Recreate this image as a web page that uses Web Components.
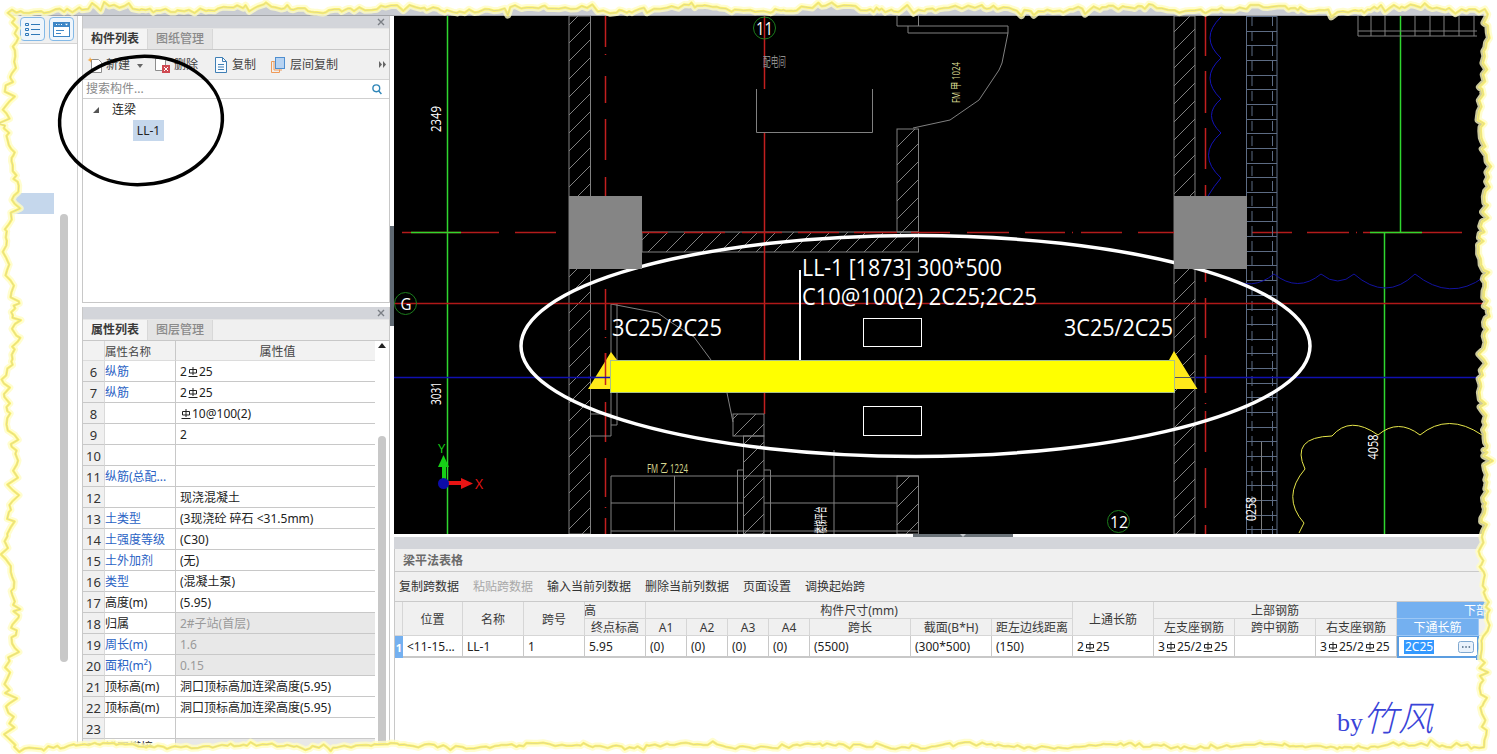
<!DOCTYPE html>
<html lang="zh-CN">
<head>
<meta charset="utf-8">
<title>梁平法表格</title>
<style>
    html, body { margin: 0; background: #fff; overflow: hidden; }
</style>
</head>
<body>
<app-shell>
    <side-rail slot="rail"></side-rail>

    <dock-panel slot="top" tab="构件列表" other="图纸管理"><component-list></component-list></dock-panel>
    <dock-panel slot="bottom" tab="属性列表" other="图层管理"><prop-table></prop-table></dock-panel>

    <cad-view slot="canvas"></cad-view>
    <span-editor slot="editor"></span-editor>
</app-shell>
<mark-up></mark-up>
<torn-edge></torn-edge>

<script>
const FONT = '"Noto Sans", "Noto Sans CJK SC", sans-serif';

class AppShell extends HTMLElement {
    constructor() {
        super();
        this.attachShadow({ mode: "open" });
        this.shadowRoot.innerHTML = `
            <style>
                :host {
                    display: grid;
                    grid-template-columns: 82px 308px 4px 1103px;
                    grid-template-rows: 16px 738px;
                    width: 1497px;
                    height: 754px;
                    overflow: hidden;
                    font: 12px/1 ${FONT};
                    color: #2b2b2b;
                }
                .band { grid-column: 1 / -1; background: #c9ccd2; border-bottom: 1px solid #a2a4a8; box-sizing: border-box; }
                .docks { display: flex; flex-direction: column; gap: 4px; min-height: 0; }
                .split { background: #fff; display: flex; flex-direction: column; }
                .split i { display: block; height: 100px; margin-top: 210px; background: #5f6972; }
                .main { display: flex; flex-direction: column; min-width: 0; }
            </style>
            <div class="band"></div>
            <slot name="rail"></slot>
            <div class="docks">
                <slot name="top"></slot>
                <slot name="bottom"></slot>
            </div>
            <div class="split"><i></i></div>
            <div class="main">
                <slot name="canvas"></slot>
                <slot name="editor"></slot>
            </div>
        `;
    }
}

class SideRail extends HTMLElement {
    constructor() {
        super();
        this.attachShadow({ mode: "open" });
        this.shadowRoot.innerHTML = `
            <style>
                :host { display: block; box-sizing: border-box; width: 78px; border-right: 1px solid #cfcfcf; background: #fff; }
                .bar {
                    height: 28px; box-sizing: border-box; background: #f0f0f0; border-bottom: 1px solid #d4d4d4;
                    display: flex; justify-content: flex-end; gap: 4px; padding: 1px 3px 0 0;
                }
                .btn {
                    width: 25px; height: 24px; box-sizing: border-box; border: 1px solid #84b9e6; border-radius: 4px;
                    background: #eef5fc; display: flex; align-items: center; justify-content: center;
                }
                .sel { height: 21px; width: 54px; margin-top: 149px; background: #c5d7ec; }
                .thumb { width: 8px; height: 448px; margin-left: 60px; background: #c8c8c8; border-radius: 4px; }
            </style>
            <div class="bar">
                <div class="btn">
                    <svg width="19" height="17" viewBox="0 0 19 17" fill="none" stroke="#2f78b8">
                        <path d="M2.5 2.5h3v2h-3zM2.5 7.5h3v2h-3zM2.5 12.5h3v2h-3z"/>
                        <path d="M8 3.5h9M8 8.5h9M8 13.5h9"/>
                    </svg>
                </div>
                <div class="btn">
                    <svg width="19" height="17" viewBox="0 0 19 17">
                        <rect x="1.5" y="1.5" width="16" height="14" fill="#fff" stroke="#3d86c6"/>
                        <rect x="1" y="1" width="17" height="5" fill="#3d86c6"/>
                        <path d="M4 3.5h1M6.5 3.5h1M9 3.5h1" stroke="#fff"/>
                        <path d="M13 2.8h3l-1.5 1.8z" fill="#fff"/>
                        <path d="M4 9.5h8M4 12.5h5" stroke="#3d86c6"/>
                    </svg>
                </div>
            </div>
            <div class="sel"></div>
            <div class="thumb"></div>
        `;
    }
}

class DockPanel extends HTMLElement {
    constructor() {
        super();
        this.attachShadow({ mode: "open" });
    }

    connectedCallback() {
        this.shadowRoot.innerHTML = `
            <style>
                :host { display: flex; flex-direction: column; box-sizing: border-box; border-left: 1px solid #c8c8c8; border-right: 1px solid #c8c8c8; border-bottom: 1px solid #c8c8c8; background: #fff; min-height: 0; }
                :host([slot="top"]) { height: 287px; flex: none; }
                :host([slot="bottom"]) { flex: 1; }
                .title { height: 12px; flex: none; background: #d3d5da; display: flex; justify-content: flex-end; align-items: center; padding-right: 4px; }
                .tabs { height: 22px; flex: none; box-sizing: border-box; display: flex; background: #f0f0f0; border-bottom: 1px solid #c8c8c8; border-top: 1px solid #e6e6e6; }
                .tab { width: 64px; display: flex; align-items: center; justify-content: center; border-right: 1px solid #d8d8d8; }
                .on { font-weight: 700; color: #3a3a3a; background: #f4f4f4; }
                .off { color: #8a8a8a; background: #e4e4e4; font-weight: 500; }
                .body { flex: 1; min-height: 0; display: flex; flex-direction: column; }
            </style>
            <div class="title">
                <svg width="8" height="8" viewBox="0 0 8 8" stroke="#7b7f85" stroke-width="1.4"><path d="M1 1l6 6M7 1l-6 6"/></svg>
            </div>
            <div class="tabs">
                <div class="tab on">${this.getAttribute("tab")}</div>
                <div class="tab off">${this.getAttribute("other")}</div>
            </div>
            <div class="body"><slot></slot></div>
        `;
    }
}

class ToolBtn extends HTMLElement {
    constructor() {
        super();
        this.attachShadow({ mode: "open" });
        this.shadowRoot.innerHTML = `
            <style>
                :host { display: inline-flex; align-items: center; gap: var(--gap, 4px); color: #444; }
            </style>
            <slot name="icon"></slot><slot></slot>
        `;
    }
}

class ComponentList extends HTMLElement {
    constructor() {
        super();
        this.attachShadow({ mode: "open" });
        this.shadowRoot.innerHTML = `
            <style>
                :host { display: flex; flex-direction: column; flex: 1; }
                .tools { height: 30px; box-sizing: border-box; flex: none; display: flex; align-items: center; background: #f0f0f0; border-bottom: 1px solid #d4d4d4; padding: 0 3px 0 4px; }
                .arrow { width: 0; height: 0; border: 3px solid transparent; border-top: 4px solid #666; border-bottom: 0; margin: 2px 12px 0 7px; }
                .more { margin-left: auto; }
                .search { height: 18px; flex: none; border-bottom: 1px solid #cfcfcf; display: flex; align-items: center; justify-content: space-between; padding: 0 7px 0 3px; color: #8a8a8a; }
                .tree { padding-top: 1px; }
                .group { height: 20px; display: flex; align-items: center; padding-left: 10px; color: #222; }
                .tri { width: 0; height: 0; border-style: solid; border-width: 0 0 6px 6px; border-color: transparent transparent #555 transparent; margin-right: 13px; }
                .leaf { width: 31px; height: 21px; margin-left: 50px; background: #c5d7ec; display: flex; align-items: center; justify-content: center; color: #222; }
            </style>
            <div class="tools">
                <tool-btn style="--gap:3px">
                    <svg slot="icon" width="16" height="18" viewBox="0 0 16 18" fill="none">
                        <path d="M4.5 3.5h7l3 3v10h-10z" fill="#fff" stroke="#8d8d8d"/>
                        <path d="M3 1l.8 2L6 3.5l-2 1L3.5 6.8 2.6 4.7.5 4l2-.8z" fill="#f6a43a"/>
                    </svg>
                    新建
                </tool-btn>
                <span class="arrow"></span>
                <tool-btn>
                    <svg slot="icon" width="15" height="17" viewBox="0 0 15 17" fill="none">
                        <path d="M.5 2.5h8l2 2v10H.5z" fill="#fff" stroke="#8d8d8d"/>
                        <rect x="7" y="9" width="8" height="8" fill="#cf4a52"/>
                        <path d="M9 11l4 4M13 11l-4 4" stroke="#fff"/>
                    </svg>
                    删除
                </tool-btn>
                <tool-btn style="margin-left:16px">
                    <svg slot="icon" width="14" height="16" viewBox="0 0 14 16" fill="none" stroke="#3f7fb5">
                        <path d="M1.5 .5h7l4 4v11h-11z" fill="#f7fbff"/>
                        <path d="M8.5 .5v4h4M4 7.5h6M4 10h6M4 12.5h6"/>
                    </svg>
                    复制
                </tool-btn>
                <tool-btn style="margin-left:15px; --gap:5px">
                    <svg slot="icon" width="14" height="16" viewBox="0 0 14 16" fill="none">
                        <path d="M3.5 4.5H.5v11h8v-3M3 4v9h8" stroke="#ef9a58"/>
                        <rect x="4.5" y=".5" width="9" height="11" fill="#b7d3f2" stroke="#4f8fd0"/>
                    </svg>
                    层间复制
                </tool-btn>
                <svg class="more" width="7" height="7" viewBox="0 0 7 7" fill="#666"><path d="M0 0l3 3.5L0 7zM4 0l3 3.5L4 7z"/></svg>
            </div>
            <div class="search">
                <span>搜索构件...</span>
                <svg width="10" height="11" viewBox="0 0 10 11" fill="none" stroke="#2f86b8" stroke-width="1.4"><circle cx="4.3" cy="4.3" r="3.4"/><path d="M6.8 7l2.6 3"/></svg>
            </div>
            <div class="tree">
                <div class="group"><span class="tri"></span>连梁</div>
                <div class="leaf">LL-1</div>
            </div>
        `;
    }
}

class RebarMark extends HTMLElement {
    constructor() {
        super();
        this.attachShadow({ mode: "open" });
        this.shadowRoot.innerHTML = `
            <style>
                :host { display: inline-block; width: 10px; height: 10px; margin: 0 1px; vertical-align: 3px; }
                svg { display: block; }
            </style>
            <svg width="10" height="10" viewBox="0 0 10 10" fill="none" stroke="#222">
                <path d="M5 0v8M1.5 2.5h7v3.5h-7zM.5 9.5h9"/>
            </svg>
        `;
    }
}

const PROPS = [
    [6, "纵筋", "2<rebar-mark></rebar-mark>25", 1],
    [7, "纵筋", "2<rebar-mark></rebar-mark>25", 1],
    [8, "", "<rebar-mark></rebar-mark>10@100(2)"],
    [9, "", "2"],
    [10, "", ""],
    [11, "纵筋(总配...", "", 1],
    [12, "", "现浇混凝土"],
    [13, "土类型", "(3现浇砼 碎石 &lt;31.5mm)", 1],
    [14, "土强度等级", "(C30)", 1],
    [15, "土外加剂", "(无)", 1],
    [16, "类型", "(混凝土泵)", 1],
    [17, "高度(m)", "(5.95)"],
    [18, "归属", "2#子站(首层)", 0, 1],
    [19, "周长(m)", "1.6", 1, 1],
    [20, "面积(m²)", "0.15", 1, 1],
    [21, "顶标高(m)", "洞口顶标高加连梁高度(5.95)"],
    [22, "顶标高(m)", "洞口顶标高加连梁高度(5.95)"],
    [23, "", ""],
    [24, "锚固搭接", "", 0, 1]
];

class PropTable extends HTMLElement {
    constructor() {
        super();
        this.attachShadow({ mode: "open" });
        const rows = PROPS.map(([n, name, value, link, locked]) => `
            <div class="no">${n}</div>
            <div class="name ${link ? "link" : ""}">${name}</div>
            <div class="val ${locked ? "locked" : ""}">${value}</div>
        `).join("");
        this.shadowRoot.innerHTML = `
            <style>
                :host { display: flex; flex: 1; min-height: 0; overflow: hidden; }
                .grid { width: 292px; display: grid; grid-template-columns: 22px 71px 199px; grid-template-rows: 20px repeat(18, 21px) 16px; align-content: start; }
                .grid > div { box-sizing: border-box; border-bottom: 1px solid #c8c8c8; display: flex; align-items: center; white-space: nowrap; overflow: hidden; padding-top: 2px; }
                .no { background: #f0f0f0; justify-content: center; font-size: 13px; color: #333; border-right: 1px solid #dadada; }
                .name { border-right: 1px solid #c8c8c8; color: #222; }
                .link { color: #2a62c4; }
                .val { padding-left: 4px; color: #222; }
                .locked { background: #e8e8e8; color: #9a9a9a; }
                .head { background: #f2f2f2; color: #444; border-bottom-color: #dcdcdc !important; }
                .mid { justify-content: center; }
                .name.head { padding-left: 0; justify-content: flex-start; font-size: 11.5px; }
                .scroll { width: 14px; flex: none; position: relative; background: #fff; display: flex; flex-direction: column; align-items: center; }
                .up { width: 0; height: 0; border: 4px solid transparent; border-bottom: 5px solid #222; border-top: 0; margin-top: 2px; }
                .thumb { width: 8px; height: 320px; margin-top: 88px; border-radius: 4px; background: #c8c8c8; }
            </style>
            <div class="grid">
                <div class="no head"></div>
                <div class="name head"><span>属性名称</span></div>
                <div class="val head mid">属性值</div>
                ${rows}
            </div>
            <div class="scroll"><span class="up"></span><span class="thumb"></span></div>
        `;
    }
}

// drawing helpers for the CAD view
const WALL = "#808080";
const RED = "#c21f1f";
const GREEN = "#2fd62f";
const line = (x1, y1, x2, y2, c = WALL, w = 1) => `<line x1="${x1}" y1="${y1}" x2="${x2}" y2="${y2}" stroke="${c}" stroke-width="${w}" shape-rendering="crispEdges"/>`;
// coloured axis lines are a bit heavier and softer than the walls
const axisV = (x, a, b, c) => `<line x1="${x + 0.5}" y1="${a}" x2="${x + 0.5}" y2="${b}" stroke="${c}" stroke-width="1.5"/>`;
const axisH = (y, a, b, c) => `<line x1="${a}" y1="${y + 0.5}" x2="${b}" y2="${y + 0.5}" stroke="${c}" stroke-width="1.5"/>`;
const hatch = (x, y, w, h) => `<rect x="${x}" y="${y}" width="${w}" height="${h}" fill="url(#hatch)" stroke="${WALL}"/>`;
const vdash = (x, parts, c = RED) => parts.map(([a, b]) => axisV(x, a, b, c)).join("");
const hdash = (y, parts, c = "#b31b1b") => parts.map(([a, b]) => axisH(y, a, b, c)).join("");
const label = (x, y, s, len, fs, fill = "#fff") => `<text x="${x}" y="${y}" font-size="${fs}" fill="${fill}" textLength="${len}" lengthAdjust="spacingAndGlyphs">${s}</text>`;
const turned = (cx, cy, s, len, fs, fill = "#fff") => `<text transform="translate(${cx} ${cy}) rotate(-90)" y="0.36em" text-anchor="middle" font-size="${fs}" fill="${fill}" textLength="${len}" lengthAdjust="spacingAndGlyphs">${s}</text>`;
const axis = (cx, cy, s, tx, ty, len, fs) => `<circle cx="${cx}" cy="${cy}" r="11" fill="none" stroke="#1c7d1c"/>` + label(tx, ty, s, len, fs);

class CadView extends HTMLElement {
    constructor() {
        super();
        this.attachShadow({ mode: "open" });

        let ladder = "";
        for (let i = 0; i < 36; i++) {
            const y = Math.round(16 + i * 14.67);
            ladder += line(1247, y, 1277, y, "#5d6c84");
        }

        this.shadowRoot.innerHTML = `
            <style>
                :host { display: block; width: 1103px; height: 518px; background: #000; flex: none; }
                svg { display: block; }
                text { font-family: "Open Sans", "Noto Sans CJK SC", sans-serif; }
            </style>
            <svg width="1103" height="518" viewBox="394 16 1103 518" fill="none">
                <defs>
                    <pattern id="hatch" width="18" height="18" patternUnits="userSpaceOnUse">
                        <path d="M0 18L18 0" stroke="#808080"/>
                    </pattern>
                </defs>

                ${axisV(447, 16, 534, GREEN)}
                ${hatch(569, 16, 21.5, 518)}
                ${hatch(1174, 16, 21, 518)}
                ${hatch(642, 232, 276.5, 20)}
                ${hatch(897, 129, 21.5, 103)}

                ${vdash(605, [[16, 47], [54, 55], [76, 103], [119, 160], [177, 196], [289, 330], [337, 338], [353, 385], [402, 442], [458, 497], [507, 508], [518, 534]])}
                ${vdash(1205, [[16, 56], [71, 113], [128, 169], [185, 196], [270, 282], [298, 338], [355, 393], [403, 404], [411, 452], [468, 508], [525, 534]])}
                ${axisV(764, 16, 89, RED)}
                ${axisV(764, 133, 414, RED)}

                ${hdash(232, [[402, 499], [515, 556], [642, 668], [684, 725], [742, 782], [798, 839], [854, 897], [911, 950], [967, 1009], [1025, 1065], [1072, 1073], [1081, 1122], [1138, 1174], [1252, 1292], [1307, 1349], [1356, 1357], [1363, 1462]])}
                ${axisH(232, 411, 461, GREEN)}
                ${axisH(232, 1370, 1422, GREEN)}
                ${axisV(1400, 16, 232, GREEN)}
                ${axisV(1384, 232, 534, GREEN)}

                <!-- upper rooms -->
                <path d="M756.5 89V132.5H872.5V89" stroke="${WALL}"/>
                <path d="M897 16V26H1008V33H908V26M918.5 16V26M1008 33L1006 43L1002 63L999 70L979 100L950 120L913 128" stroke="${WALL}"/>

                <!-- stair ladder -->
                <path d="M1246.5 16V534M1277 16V534" stroke="#5d6c84"/>
                ${ladder}
                <path d="M1252 16V534M1272.5 16V534" stroke="#5d6c84" stroke-dasharray="10 5"/>
                ${line(1261, 442, 1261, 534, WALL)}

                <!-- top right grid -->
                <path d="M1358 16V36H1477M1358 31H1477M1371 16V36M1385 16V36M1415 16V36M1430 16V36M1444 16V36M1459 16V36M1474 16V36" stroke="${WALL}"/>

                <!-- clouds -->
                <path d="M1221 17Q1199 38 1221 58Q1199 78 1221 99Q1202 115 1221 133Q1196 155 1221 178Q1214 186 1208 196" stroke="#1212b8"/>
                <path d="M1228 277Q1252 292 1274 274Q1298 293 1321 274Q1338 288 1354 274Q1386 302 1415 274Q1450 302 1484 277" stroke="#1212a0"/>
                <path d="M1299 533L1304 523Q1281 497 1305 469Q1290 437 1332 436Q1350 415 1378 435Q1398 418 1420 435Q1448 412 1482 435" stroke="#e6e64a"/>

                <!-- lower rooms -->
                <path d="M590.5 269V414H611M590.5 534V436H611V304H617V425H611M611 304L658 313L672 323L694 337L711 360M727 393L733 422" stroke="${WALL}"/>
                ${hatch(733, 414, 31, 22)}
                ${hatch(743.5, 436, 20.5, 98)}
                <path d="M737.5 534V470H743.5M764 470H770.5V534M834 450V534" stroke="${WALL}"/>
                <path d="M611 534V476H918.5M611 503H743M764 503H897M611 531H918.5M674.5 476V531" stroke="${WALL}"/>
                ${hatch(897, 476, 21.5, 58)}

                ${axisH(303, 394, 1497, "#b01818")}
                ${axisH(377, 394, 1497, "#1010b0")}

                <!-- the drawn ring runs under the columns -->
                <ellipse cx="915.5" cy="346" rx="394.5" ry="110.5" stroke="#fff" stroke-width="3.5"/>
                <rect x="569" y="196" width="73" height="73" fill="#858585"/>
                <rect x="1174" y="196" width="73" height="73" fill="#858585"/>

                <!-- beam -->
                <path d="M588 389L611 352L617 360H611V389Z" fill="#ffe91a"/>
                <path d="M1174 351L1197.5 389H1174V360H1169Z" fill="#ffe91a"/>
                ${axisV(605, 353, 385, RED)}
                ${axisH(377, 588, 611, "#1010b0")}
                ${line(1175, 377, 1195, 377, "#555")}
                <rect x="610.5" y="360.5" width="564" height="32" fill="#ffff00" stroke="#a9c08a"/>
                <rect x="863.5" y="318.5" width="58" height="28" stroke="#fff"/>
                <rect x="863.5" y="406.5" width="58" height="29" stroke="#fff"/>
                ${line(799.5, 270, 799.5, 360, "#fff", 2)}

                ${label(802, 276, "LL-1 [1873] 300*500", 200, 23)}
                ${label(802, 305, "C10@100(2) 2C25;2C25", 235, 23)}
                ${label(612, 336, "3C25/2C25", 110, 23)}
                ${label(1064, 336, "3C25/2C25", 109, 23)}

                ${axis(764.5, 28, "11", 756, 35, 17, 19)}
                ${axis(405.5, 303.5, "G", 400.5, 310, 11, 17)}
                ${axis(1118.5, 521.5, "12", 1110, 528, 18, 17)}

                ${label(763, 66, "配电间", 23, 13, "#8f8f8f")}
                ${label(647, 473, "FM 乙 1224", 41, 12, "#d8d890")}
                ${turned(956, 82.5, "FM 甲 1024", 41, 11, "#d8d890")}
                ${turned(436, 119, "2349", 26, 15)}
                ${turned(436, 393.5, "3031", 23, 15)}
                ${turned(1372.5, 447, "4058", 25, 14)}
                ${turned(1251, 509, "0258", 24, 14)}
                ${turned(820, 520, "楼梯平台", 27, 13)}

                <!-- ucs -->
                ${line(443.5, 483, 443.5, 465, "#16d016", 4)}
                <path d="M443.5 455L449 467H438Z" fill="#16d016"/>
                ${line(443, 483, 463, 483, "#e81414", 4)}
                <path d="M473 483.5L461 478V489Z" fill="#e81414"/>
                <circle cx="443.5" cy="483.5" r="5.5" fill="#0c0ca8"/>
                <text x="438" y="453" font-size="13" fill="#16d016">Y</text>
                <text x="475" y="489" font-size="14" fill="#e81414">X</text>
            </svg>
        `;
    }
}

class SpanEditor extends HTMLElement {
    constructor() {
        super();
        this.attachShadow({ mode: "open" });
        const mark = "<rebar-mark></rebar-mark>";
        const heads = [
            ["", "1/3", "1"],
            ["位置", "1/3", "2"],
            ["名称", "1/3", "3"],
            ["跨号", "1/3", "4"],
            ["<span class='cut'>高</span>", "1", "5"],
            ["构件尺寸(mm)", "1", "6/13"],
            ["上通长筋", "1/3", "13"],
            ["上部钢筋", "1", "14/17"],
            ["<span class='clip'>下部</span>", "1", "17/19", "blue"],
            ["终点标高", "2", "5"],
            ["A1", "2", "6"],
            ["A2", "2", "7"],
            ["A3", "2", "8"],
            ["A4", "2", "9"],
            ["跨长", "2", "10"],
            ["截面(B*H)", "2", "11"],
            ["距左边线距离", "2", "12"],
            ["左支座钢筋", "2", "14"],
            ["跨中钢筋", "2", "15"],
            ["右支座钢筋", "2", "16"],
            ["下通长筋", "2", "17", "blue"],
            ["", "2", "18"]
        ].map(([t, r, c, k]) => `<div class="h ${k || ""}" style="grid-row:${r};grid-column:${c}">${t}</div>`).join("");
        const cells = [
            "&lt;11-15...", "LL-1", "1", "5.95", "(0)", "(0)", "(0)", "(0)", "(5500)", "(300*500)", "(150)",
            `2${mark}25`, `3${mark}25/2${mark}25`, "", `3${mark}25/2${mark}25`
        ].map(t => `<div class="d">${t}</div>`).join("");

        this.shadowRoot.innerHTML = `
            <style>
                :host { display: flex; flex-direction: column; flex: 1; min-height: 0; background: #fff; }
                .strip { height: 3px; flex: none; background: #fff; display: flex; padding-left: 519px; }
                .strip i { width: 100px; background: #6a7278; display: flex; justify-content: center; }
                .strip i::after { content: ""; width: 0; height: 0; border: 3px solid transparent; border-top-color: #c4c8cc; border-bottom: 0; }
                .cap { height: 12px; flex: none; background: #d3d5da; }
                .box { flex: 1; display: flex; flex-direction: column; border-left: 1px solid #c8c8c8; }
                .title { height: 23px; flex: none; box-sizing: border-box; background: #f0f0f0; border-bottom: 1px solid #cacaca; display: flex; align-items: center; padding: 2px 0 0 8px; font-weight: 700; color: #6a6a6a; }
                .bar { height: 30px; flex: none; box-sizing: border-box; background: #f0f0f0; border-bottom: 1px solid #cacaca; display: flex; align-items: center; gap: 14px; padding-left: 4px; color: #333; }
                .bar .off { color: #a8a8a8; }
                .grid {
                    display: grid;
                    grid-template-columns: 8px 60px 61px 61px 61px 41px 41px 41px 41px 101px 81px 81px 81px 81px 81px 81px 82px 1fr;
                    grid-template-rows: 17px 17px 22px;
                }
                .h { background: #f0f0f0; border-right: 1px solid #d6d6d6; border-bottom: 1px solid #d6d6d6; display: flex; align-items: center; justify-content: center; color: #3a3a3a; overflow: hidden; box-sizing: border-box; padding-top: 2px; }
                .blue { background: #74b0f0; color: #fff; border-color: #9cc7f5; }
                .cut { margin-right: auto; margin-left: -1px; }
                .clip { margin-left: 67px; margin-right: auto; white-space: nowrap; }
                .d { border-right: 1px solid #c8c8c8; border-bottom: 2px solid #c8c8c8; display: flex; align-items: center; padding: 2px 0 0 4px; white-space: nowrap; overflow: hidden; color: #222; box-sizing: border-box; }
                .row { background: #74b0f0; color: #fff; font-weight: 700; display: flex; align-items: center; justify-content: center; font-size: 11px; overflow: hidden; }
                .edit { position: relative; box-sizing: border-box; border: 2px solid #5b9de0; border-top-width: 1px; display: flex; align-items: center; justify-content: space-between; padding: 0 3px 0 5px; }
                .edit b { font-weight: 400; background: #3399ff; color: #fff; padding: 1px 1px; }
                .edit svg { display: block; }
                .edit::after { content: ""; position: absolute; right: -4px; bottom: -4px; width: 5px; height: 5px; background: #5b9de0; }
            </style>
            <div class="strip"><i></i></div>
            <div class="cap"></div>
            <div class="box">
                <div class="title">梁平法表格</div>
                <div class="bar">
                    <span>复制跨数据</span><span class="off">粘贴跨数据</span><span>输入当前列数据</span><span>删除当前列数据</span><span>页面设置</span><span>调换起始跨</span>
                </div>
                <div class="grid">
                    ${heads}
                    <div class="row">1</div>
                    ${cells}
                    <div class="edit">
                        <b>2C25</b>
                        <svg width="16" height="12" viewBox="0 0 16 12"><rect x=".5" y=".5" width="15" height="11" rx="2" fill="#eaf2fb" stroke="#7fa8d0"/><path d="M4 6h1.5M7.3 6h1.5M10.6 6h1.5" stroke="#44607e" stroke-width="1.4"/></svg>
                    </div>
                </div>
            </div>
        `;
    }
}

// hand drawn notes put on top of the screenshot
class MarkUp extends HTMLElement {
    constructor() {
        super();
        this.attachShadow({ mode: "open" });
        this.shadowRoot.innerHTML = `
            <style>
                :host { position: absolute; left: 0; top: 0; width: 1497px; height: 754px; pointer-events: none; }
                svg { position: absolute; left: 0; top: 0; }
                .sign { position: absolute; left: 1337px; top: 695px; color: #3a44d8; font: italic 300 35px/42px "Noto Sans CJK SC", sans-serif; white-space: nowrap; }
                .sign small { font: 26px/42px "Liberation Serif", serif; }
            </style>
            <svg width="1497" height="754" fill="none">
                <ellipse cx="141" cy="120.5" rx="81.5" ry="64" stroke="#000" stroke-width="3.5" transform="rotate(-4 141 120.5)"/>
            </svg>
            <div class="sign"><small>by</small>竹风</div>
        `;
    }
}

class TornEdge extends HTMLElement {
    constructor() {
        super();
        this.attachShadow({ mode: "open" });

        let seed = 73;
        const rnd = () => (seed = (seed * 16807) % 2147483647) / 2147483647;
        // one jagged side: from/to = running coordinate, base = mean distance, amp = spike size
        const side = (from, to, base, amp, point) => {
            const out = [];
            const dir = Math.sign(to - from);
            for (let p = from; (to - p) * dir > 0; p += dir * (2 + rnd() * 5)) {
                const slow = Math.sin(p / 23) * amp * 0.4;
                const spike = rnd() < 0.18 ? (rnd() - 0.5) * amp * 1.6 : 0;
                out.push(point(p, base + slow + spike + (rnd() - 0.5) * amp * 0.7));
            }
            return out;
        };
        const pts = [
            ...side(12, 1484, 9, 6, (p, v) => [p, v]),
            ...side(9, 745, 1484, 8, (p, v) => [v, p]),
            ...side(1484, 12, 746, 4.5, (p, v) => [p, v]),
            ...side(745, 9, 11, 11, (p, v) => [v, p])
        ];
        const d = "M" + pts.map(([x, y]) => `${x.toFixed(1)} ${y.toFixed(1)}`).join("L") + "Z";

        this.shadowRoot.innerHTML = `
            <style>
                :host { position: absolute; left: 0; top: 0; width: 1497px; height: 754px; pointer-events: none; }
                svg { display: block; }
            </style>
            <svg width="1497" height="754" fill="none">
                <path d="M0 0H1497V754H0Z${d}" fill="#fff" fill-rule="evenodd"/>
                <path d="${d}" stroke="#fffcc4" stroke-width="7" stroke-linejoin="round" opacity=".8"/>
                <path d="${d}" stroke="#fff36c" stroke-width="2.5" stroke-linejoin="round"/>
                <path d="${d}" stroke="#cfcd9f" stroke-width=".7"/>
            </svg>
        `;
    }
}

customElements.define("app-shell", AppShell);
customElements.define("side-rail", SideRail);
customElements.define("dock-panel", DockPanel);
customElements.define("tool-btn", ToolBtn);
customElements.define("component-list", ComponentList);
customElements.define("rebar-mark", RebarMark);
customElements.define("prop-table", PropTable);
customElements.define("cad-view", CadView);
customElements.define("span-editor", SpanEditor);
customElements.define("mark-up", MarkUp);
customElements.define("torn-edge", TornEdge);
</script>
</body>
</html>
